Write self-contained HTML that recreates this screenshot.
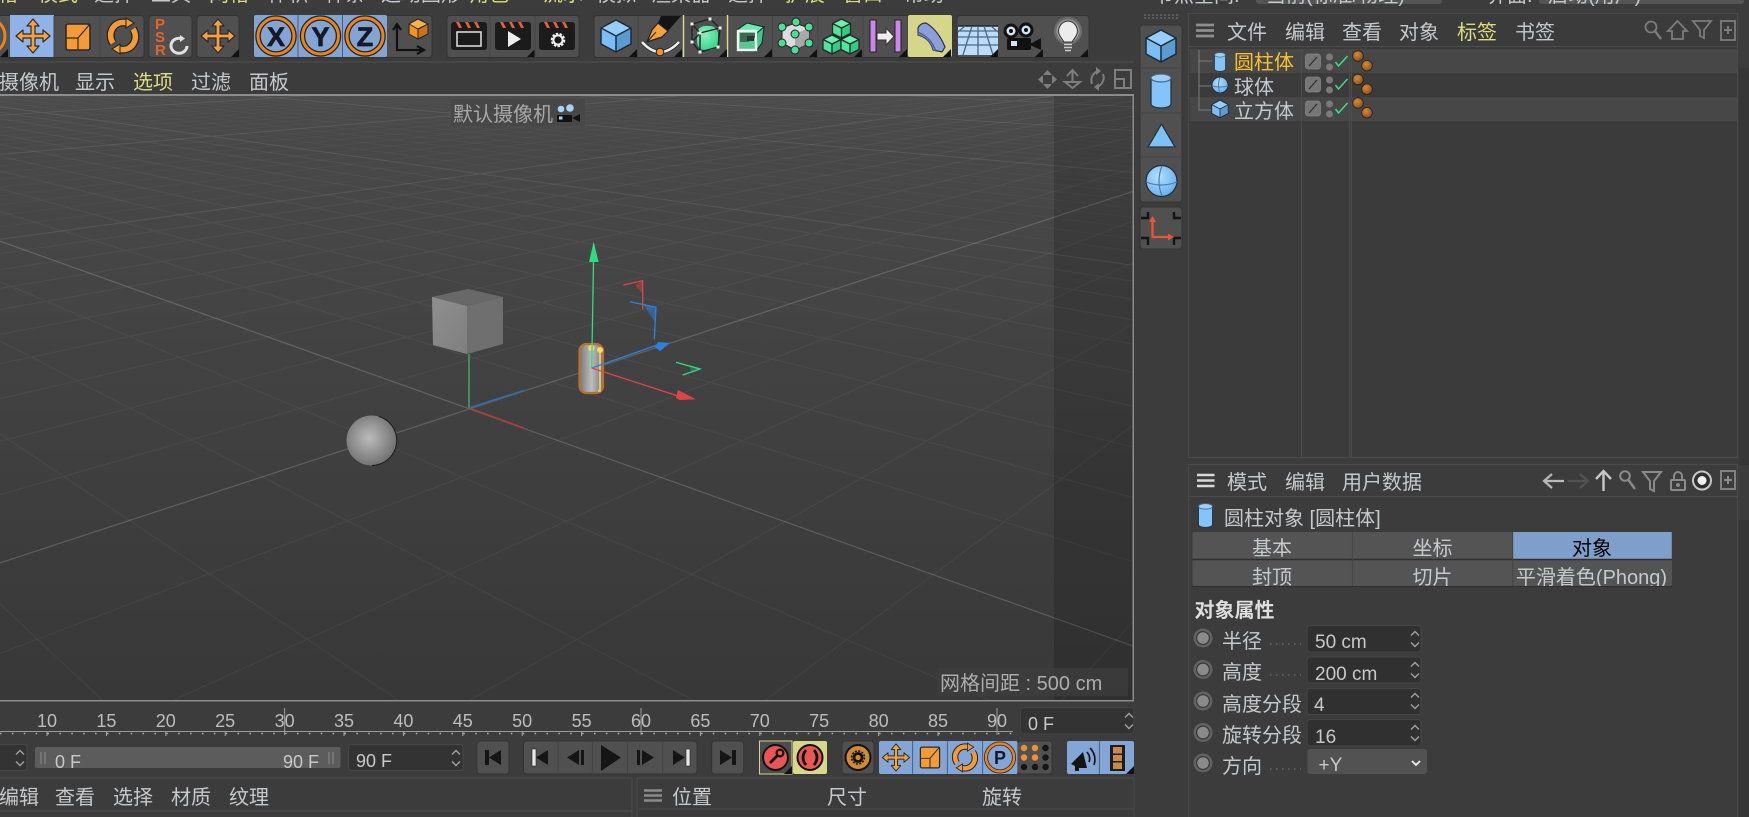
<!DOCTYPE html>
<html lang="zh"><head><meta charset="utf-8"><title>Cinema 4D</title>
<style>
html,body{margin:0;padding:0;background:#3c3c3c;overflow:hidden;width:1749px;height:817px}
body{position:relative}
svg{display:block}
text{font-family:"Liberation Sans","Noto Sans CJK SC",sans-serif;font-size:20px;fill:#c6c9cc}
.y{fill:#dcdc84}.l{font-size:18px;fill:#bdbdbd}.v{font-size:19px;fill:#c8c8c8}
.vt{position:absolute;left:1746px;writing-mode:vertical-rl;font:20px/20px "Liberation Sans","Noto Sans CJK SC",sans-serif;color:#b8b8b8;white-space:nowrap}
</style></head><body>
<svg xmlns="http://www.w3.org/2000/svg" width="1749" height="817" viewBox="0 0 1749 817">
<defs>
<linearGradient id="vp" x1="0" y1="0" x2="0" y2="1"><stop offset="0" stop-color="#4a4a4a"/><stop offset=".5" stop-color="#414141"/><stop offset="1" stop-color="#383838"/></linearGradient>
<linearGradient id="cg" x1="0" y1="0" x2="1" y2="0"><stop offset="0" stop-color="#777"/><stop offset=".5" stop-color="#bdbdbd"/><stop offset="1" stop-color="#777"/></linearGradient>
<linearGradient id="lf" x1="0" y1="0" x2="1" y2="1"><stop offset="0" stop-color="#8f8f8f"/><stop offset="1" stop-color="#7f7f7f"/></linearGradient>
<radialGradient id="sg" cx=".45" cy=".45" r=".6"><stop offset="0" stop-color="#bcbcbc"/><stop offset="1" stop-color="#6c6c6c"/></radialGradient>
<radialGradient id="bs" cx=".4" cy=".35" r=".7"><stop offset="0" stop-color="#b6dffd"/><stop offset="1" stop-color="#62aeee"/></radialGradient>
<radialGradient id="gs" cx=".4" cy=".35" r=".7"><stop offset="0" stop-color="#8df0be"/><stop offset="1" stop-color="#36d68a"/></radialGradient>
<radialGradient id="ob" cx=".4" cy=".35" r=".7"><stop offset="0" stop-color="#d98a3a"/><stop offset="1" stop-color="#8a4c12"/></radialGradient>
<clipPath id="vc"><rect x="0" y="96" width="1133" height="604"/></clipPath>
<clipPath id="tc"><rect x="1192" y="532" width="480" height="54"/></clipPath>
<path id="tri" d="M-8 0L0-8V0Z" fill="#111"/>
<g id="mv"><path d="M0-17L6-10H2V-2H10V-6L17 0L10 6V2H2V10H6L0 17L-6 10H-2V2H-10V6L-17 0L-10-6V-2H-2V-10H-6Z" fill="#f6a03e" stroke="#2a2a2a" stroke-width="1.2" stroke-linejoin="round"/></g>
<g id="sc"><rect x="-12" y="-13" width="24" height="26" rx="2" fill="#f49b38" stroke="#2a2a2a" stroke-width="1.6"/><path d="M-12 1H0V13M0 1L12-13" fill="none" stroke="#2a2a2a" stroke-width="1.2"/></g>
<g id="rt"><path d="M-10 7A12.500 13 0 0 1 4-13M10-7A12.500 13 0 0 1-4 13" fill="none" stroke="#222" stroke-width="8"/><path d="M-10 7A12.500 13 0 0 1 4-13M10-7A12.500 13 0 0 1-4 13" fill="none" stroke="#f49b38" stroke-width="5.500"/><path d="M3-18L11-13L3-8ZM-3 18L-11 13L-3 8Z" fill="#f49b38" stroke="#222" stroke-width="1"/></g>
<g id="cube"><path d="M0-16L15-8L0 0L-15-8Z" fill="#95cdfb"/><path d="M-15-8L0 0V16L-15 8Z" fill="#7cbdf6"/><path d="M15-8L0 0V16L15 8Z" fill="#5b9bd2"/><path d="M0-16L15-8V8L0 16L-15 8V-8ZM-15-8L0 0L15-8M0 0V16" fill="none" stroke="#1c2a36" stroke-width="1.5" stroke-linejoin="round"/></g>
<g id="gc"><path d="M0-9L9-4.500L0 0L-9-4.500Z" fill="#6ef0ae"/><path d="M-9-4.500L0 0V10L-9 5.500Z" fill="#4ee59a"/><path d="M9-4.500L0 0V10L9 5.500Z" fill="#38c884"/><path d="M0-9L9-4.500V5.500L0 10L-9 5.500V-4.500ZM-9-4.500L0 0L9-4.500M0 0V10" fill="none" stroke="#1f2a26" stroke-width="1.300" stroke-linejoin="round"/></g>
<g id="cy"><path d="M-10-13V13A10 4 0 0 0 10 13V-13Z" fill="#83c4fb" stroke="#26323c" stroke-width="1.3"/><ellipse cx="0" cy="-13" rx="10" ry="4" fill="#9ccffa" stroke="#4a6880" stroke-width="1.3"/></g>
<g id="rad"><circle r="9.500" fill="#626262"/><circle r="7" fill="#383838"/><circle r="5.800" fill="#8a8a8a"/></g>
<g id="ch"><path d="M-4-3.5L0-7.5L4-3.5M-4 3.5L0 7.5L4 3.5" fill="none" stroke="#a0a0a0" stroke-width="1.4"/></g>
<g id="lb"><rect x="0" y="0" width="15" height="15" rx="3" fill="#767676" stroke="#858585" stroke-width=".8"/><path d="M3.500 12L11.500 3" stroke="#2e2e2e" stroke-width="1.200"/></g>
<g id="chk"><circle cx="0" cy="0" r="3.500" fill="#7a7a7a"/><circle cx="0" cy="10" r="3.500" fill="#7a7a7a"/><path d="M6 5L9 9L18-1" fill="none" stroke="#3fdc88" stroke-width="1.500"/></g>
<g id="ob2"><circle cx="0" cy="0" r="5.300" fill="url(#ob)" stroke="#222" stroke-width=".8"/><circle cx="9" cy="9.700" r="5.300" fill="url(#ob)" stroke="#222" stroke-width=".8"/></g>
<g id="clap"><rect x="-18" y="-14" width="36" height="28" rx="3" fill="#1b1b1b"/><path d="M-13-14L-10-8H-7L-10-14ZM-4-14L-1-8H2L-1-14ZM5-14L8-8H11L8-14Z" fill="#e0643a"/></g>
</defs>

<rect width="1749" height="817" fill="#3c3c3c"/>

<!-- top menu remnants -->
<g>
<text x="-22" y="1" class="y">网格</text><text x="38" y="1" class="y">模式</text><text x="94" y="1">选择</text><text x="151" y="1">工具</text><text x="209" y="1" class="y">网格</text><text x="268" y="1">体积</text><text x="325" y="1">样条</text><text x="381" y="1">运动图形</text><text x="469" y="1" class="y">角色</text><text x="543" y="1" class="y">流水</text>
<text x="596" y="1">模拟</text><text x="651" y="1">渲染器</text><text x="728" y="1">选择</text><text x="785" y="1" class="y">扩展</text><text x="843" y="1" class="y">窗口</text><text x="904" y="1">帮助</text>
<text x="1154" y="2">节点空间:</text><rect x="1256" y="-10" width="186" height="14" rx="3" fill="#555"/><text x="1266" y="2">当前(标准/物理)</text>
<text x="1487" y="2">界面:</text><rect x="1539" y="-10" width="205" height="14" rx="3" fill="#555"/><text x="1548" y="2">启动(用户)</text>
</g>

<!-- main toolbar -->
<g fill="#505050" stroke="#333">
<rect x="-10" y="15.5" width="154" height="42" rx="3"/>
<rect x="149" y="15.5" width="43" height="42" rx="3"/>
<rect x="197" y="15.5" width="42" height="42" rx="3"/>
<rect x="254" y="15.5" width="178" height="42" rx="3"/>
<rect x="447" y="15.5" width="132" height="42" rx="3"/>
<rect x="594" y="15.5" width="358" height="42" rx="3"/>
<rect x="957" y="15.5" width="132" height="42" rx="3"/>
</g>
<circle cx="-13" cy="36" r="18" fill="none" stroke="#e8841e" stroke-width="3"/><use href="#tri" x="8" y="57"/>
<rect x="10" y="15" width="44" height="42" fill="#8fb3e6"/><use href="#mv" x="33" y="36"/>
<use href="#sc" x="78" y="37"/><path d="M54 16V57M100 16V57" stroke="#444"/>
<use href="#rt" x="123" y="36"/>
<text x="155" y="29" style="font-size:15px;font-weight:bold;fill:#e8622e">P</text><text x="155" y="42" style="font-size:15px;font-weight:bold;fill:#e8622e">S</text><text x="155" y="55" style="font-size:15px;font-weight:bold;fill:#e8622e">R</text>
<path d="M187 46A8 7.500 0 1 1 181 38.500" fill="none" stroke="#e0e0e0" stroke-width="3"/><path d="M180 35L185 38.500L180 42Z" fill="#e0e0e0"/>
<use href="#mv" x="218" y="36"/><use href="#tri" x="239" y="57"/>

<rect x="254" y="15" width="133" height="42" rx="2" fill="#84a4d4"/><path d="M298 15V57M342.5 15V57" stroke="#4a5f80"/>
<g fill="none"><circle cx="276" cy="36" r="18" stroke="#222" stroke-width="5.500"/><circle cx="276" cy="36" r="18" stroke="#e8841e" stroke-width="3"/>
<circle cx="320.5" cy="36" r="18" stroke="#222" stroke-width="5.500"/><circle cx="320.5" cy="36" r="18" stroke="#e8841e" stroke-width="3"/>
<circle cx="365" cy="36" r="18" stroke="#222" stroke-width="5.500"/><circle cx="365" cy="36" r="18" stroke="#e8841e" stroke-width="3"/></g>
<text x="276" y="46" text-anchor="middle" style="font-size:27px;font-weight:bold;fill:#15192a;stroke:#15192a;stroke-width:.7">X</text><text x="320.5" y="46" text-anchor="middle" style="font-size:27px;font-weight:bold;fill:#15192a;stroke:#15192a;stroke-width:.7">Y</text><text x="365" y="46" text-anchor="middle" style="font-size:27px;font-weight:bold;fill:#15192a;stroke:#15192a;stroke-width:.7">Z</text>
<path d="M397 25V50H422M393 30L397 24L401 30M417 46L424 50L417 54" fill="none" stroke="#111" stroke-width="2.2"/>
<path d="M409 24L418 19L428 24L418 29Z" fill="#ffb04c"/><path d="M409 24L418 29V39L409 34Z" fill="#f4921f"/><path d="M428 24L418 29V39L428 34Z" fill="#c8741a"/><path d="M418 19L428 24V34L418 39L409 34V24ZM409 24L418 29L428 24M418 29V39" fill="none" stroke="#222"/>

<use href="#clap" x="469" y="36"/><rect x="457" y="32" width="24" height="14" fill="none" stroke="#d8d8d8" stroke-width="1.6"/>
<use href="#clap" x="513" y="36"/><path d="M508 31L521 39L508 47Z" fill="#eee"/><use href="#tri" x="535" y="57"/>
<use href="#clap" x="557" y="36"/><circle cx="558" cy="40" r="5.5" fill="none" stroke="#eee" stroke-width="3.5" stroke-dasharray="2.2 1.2"/><circle cx="558" cy="40" r="4.6" fill="none" stroke="#eee" stroke-width="2"/>
<path d="M490 16V57M535 16V57" stroke="#444"/>

<use href="#cube" x="616" y="36"/><use href="#tri" x="637" y="57"/>
<path d="M638 16V57M683 16V57M728 16V57M772.5 16V57M818 16V57M863 16V57M908 16V57" stroke="#444"/>
<!-- pen -->
<path d="M661 16H681L668 31L658 23Z" fill="#141414"/><path d="M658 23L668 31L662 37L647 42L652 30Z" fill="#f5a041" stroke="#222" stroke-width="1.200" stroke-linejoin="round"/><path d="M648 41L656 32" stroke="#222"/>
<path d="M642 42Q660 62 679 42" fill="none" stroke="#222" stroke-width="4"/><path d="M642 42Q660 62 679 42" fill="none" stroke="#eee" stroke-width="2.600"/><circle cx="660" cy="52" r="3.800" fill="#f09030" stroke="#222"/><use href="#tri" x="682" y="57"/>
<path d="M683.5 15V57M727.5 15V57" stroke="#d8d88a" stroke-width="1.5"/>
<!-- subdivision -->
<rect x="697" y="26" width="21" height="24" rx="8" fill="url(#gs)"/><path d="M692 24L710 19L720 28L718 47L700 52L692 42ZM692 24L700 33L720 28M700 33V52M700 33L692 42" fill="none" stroke="#222" stroke-width="1.400"/>
<g fill="#eee"><rect x="690.500" y="22.500" width="3" height="3"/><rect x="708.500" y="17.500" width="3" height="3"/><rect x="718.500" y="26.500" width="3" height="3"/><rect x="716.500" y="45.500" width="3" height="3"/><rect x="698.500" y="50.500" width="3" height="3"/><rect x="690.500" y="40.500" width="3" height="3"/><rect x="698.500" y="31.500" width="3" height="3"/></g>
<use href="#tri" x="727" y="57"/>
<!-- box -->
<path d="M737 30L747 23L764 27L757 33Z" fill="#66eeac" stroke="#222"/><path d="M764 27L762 43L756 51L757 33Z" fill="#3bc985" stroke="#222"/><rect x="738" y="31" width="18" height="19" fill="#55c98f" stroke="#f5f5f5" stroke-width="2.400"/><path d="M740 33H755V38L748 42H740Z" fill="#3d6a54"/><rect x="747" y="36" width="7" height="5" fill="#333"/><use href="#tri" x="772" y="57"/>
<!-- array -->
<path d="M795 23L809 28V43L795 50L782 43V28Z" fill="#dcdcdc" stroke="#222"/><path d="M795 34L809 28V43L795 50Z" fill="#a9a9a9"/>
<g fill="#48e095" stroke="#222"><circle cx="796" cy="22" r="4"/><circle cx="809" cy="27" r="4"/><circle cx="809" cy="43" r="4"/><circle cx="795" cy="50" r="4"/><circle cx="782" cy="43" r="4"/><circle cx="782" cy="27" r="4"/><circle cx="795" cy="34" r="4"/></g><use href="#tri" x="817" y="57"/>
<!-- cloner cubes -->
<use href="#gc" x="841.500" y="28"/><use href="#gc" x="832" y="44"/><use href="#gc" x="850" y="44"/><use href="#tri" x="862" y="57"/>
<!-- effector -->
<rect x="870" y="20" width="6" height="32" fill="#cf86ec" stroke="#222"/><rect x="895" y="20" width="6" height="32" fill="#cf86ec" stroke="#222"/><path d="M877 33H886V28L894 36.500L886 45V40H877Z" fill="#eee" stroke="#333"/><use href="#tri" x="907" y="57"/>
<!-- bend -->
<rect x="908" y="15" width="44" height="42" rx="2" fill="#d6d68a"/><path d="M918 28Q920 23 926 23Q938 30 945 47L942 52L933 50Q930 38 918 35Z" fill="#8b9fdc" stroke="#2c2c40" stroke-width="1.200"/><path d="M918 32Q931 37 936 51L933 50Q930 38 918 35Z" fill="#6d80c0" stroke="#44506f" stroke-width=".8"/><use href="#tri" x="951" y="57"/>
<!-- floor -->
<path d="M958 26H998V55H958Z" fill="#bcdcf9"/><path d="M958 26H998" stroke="#222" stroke-width="1.500"/><path d="M958 31H998M958 37H998M958 45H998M972 26L963 55M984 26L993 55M978 26V55M965 26L958 32M991 26L998 32" stroke="#4a6a86" stroke-width="1.300" fill="none"/><use href="#tri" x="998" y="57"/>
<!-- camera -->
<circle cx="1011" cy="31" r="6" fill="#cfe6fa" stroke="#111" stroke-width="3"/><circle cx="1026" cy="30" r="6" fill="#cfe6fa" stroke="#111" stroke-width="3"/><circle cx="1011" cy="31" r="2" fill="#111"/><circle cx="1026" cy="30" r="2" fill="#111"/><rect x="1007" y="38" width="24" height="12" rx="2" fill="#111"/><path d="M1030 44L1041 38V50L1030 45Z" fill="#111"/><rect x="1011" y="41" width="6" height="5" fill="#cfe6fa"/><use href="#tri" x="1043" y="57"/>
<!-- bulb -->
<circle cx="1068" cy="31" r="14" fill="#fff" opacity=".18"/><circle cx="1068" cy="31" r="11.500" fill="#fff" opacity=".3"/><path d="M1068 21A10 10 0 0 1 1076 36L1072 42H1064L1060 36A10 10 0 0 1 1068 21Z" fill="#ececec" stroke="#333"/><path d="M1064 44.500H1072M1064 47.500H1072M1065 50.500H1071" stroke="#ccc" stroke-width="1.600"/><use href="#tri" x="1088" y="57"/>

<path d="M0 62H1134" stroke="#4a4a4a" stroke-width="1.5"/>

<!-- viewport menu -->
<text x="-1" y="89">摄像机</text><text x="75" y="89">显示</text><text x="133" y="89" class="y">选项</text><text x="191" y="89">过滤</text><text x="249" y="89">面板</text>
<g fill="none" stroke="#7e7e7e" stroke-width="2">
<path d="M1047.500 70L1043 75H1052ZM1047.500 89L1043 84H1052ZM1038 79.500L1043 75V84ZM1057 79.500L1052 75V84Z" fill="#7e7e7e" stroke="none"/><path d="M1043 75L1047.500 79.500L1052 75M1043 84L1047.500 79.500L1052 84" stroke="#3c3c3c" stroke-width="1.500"/>
<path d="M1072.500 71V83M1067 76L1072.500 70L1078 76M1065 82H1080L1072.500 88Z"/>
<path d="M1092 84A10 10 0 0 1 1098 71M1103 74A10 10 0 0 1 1097 87"/><path d="M1096 67L1101 71L1096 75ZM1099 91L1094 87L1099 83Z" fill="#7e7e7e" stroke="none"/>
<rect x="1115" y="70" width="16" height="18"/><path d="M1115 79H1124V88"/>
</g>

<!-- viewport -->
<rect x="0" y="95" width="1133" height="605" fill="url(#vp)"/>
<g clip-path="url(#vc)" fill="none">
<path stroke="#fff" stroke-opacity=".028" d="M-619 20L4535 700M-619 20L4830 700M-619 20L5126 700M-619 20L5421 700M-619 20L5717 700M-619 20L6012 700M-619 20L6308 700M-619 20L6603 700M-619 20L6899 700M-619 20L7490 700M-619 20L7785 700M-619 20L8081 700M-619 20L8376 700M-619 20L8672 700M-619 20L8967 700M-619 20L9263 700M-619 20L9558 700M-619 20L9854 700M-619 20L10445 700M-619 20L10740 700M-619 20L11036 700M-619 20L11331 700M-619 20L11627 700M-619 20L11922 700M-619 20L12218 700M-619 20L12513 700M-619 20L12809 700M-619 20L13400 700M-619 20L13695 700M-619 20L13991 700M-619 20L14286 700M-619 20L14582 700"/>
<path stroke="#fff" stroke-opacity=".028" d="M1689 9L-3674 700M1689 9L-3970 700M1689 9L-4266 700M1689 9L-4562 700M1689 9L-4858 700M1689 9L-5154 700M1689 9L-5450 700M1689 9L-5746 700M1689 9L-6042 700M1689 9L-6634 700M1689 9L-6930 700M1689 9L-7226 700M1689 9L-7522 700M1689 9L-7818 700M1689 9L-8114 700M1689 9L-8410 700M1689 9L-8706 700M1689 9L-9002 700M1689 9L-9594 700M1689 9L-9890 700M1689 9L-10186 700M1689 9L-10482 700M1689 9L-10778 700M1689 9L-11074 700M1689 9L-11370 700M1689 9L-11666 700M1689 9L-11962 700"/>
<path stroke="#fff" stroke-opacity=".05" d="M-619 20L102 700M-619 20L398 700M-619 20L693 700M-619 20L989 700M-619 20L1580 700M-619 20L1875 700M-619 20L2171 700M-619 20L2466 700M-619 20L2762 700M-619 20L3057 700M-619 20L3353 700M-619 20L3648 700M-619 20L3944 700M1689 9L1062 700M1689 9L766 700M1689 9L470 700M1689 9L174 700M1689 9L-122 700M1689 9L-714 700M1689 9L-1010 700M1689 9L-1306 700M1689 9L-1602 700M1689 9L-1898 700M1689 9L-2194 700M1689 9L-2490 700M1689 9L-2786 700M1689 9L-3082 700"/>
<path stroke="#fff" stroke-opacity=".09" d="M-619 20L4239 700M-619 20L7194 700M-619 20L10149 700M-619 20L13104 700M1689 9L-3378 700M1689 9L-6338 700M1689 9L-9298 700M1689 9L-12258 700"/>
<path stroke="#fff" stroke-opacity=".17" stroke-width="1.200" d="M-619 20L1284 700M1689 9L-418 700"/>
</g>
<rect x="1054" y="96" width="79" height="604" fill="#000" opacity=".15"/>
<rect x="0" y="94" width="1134" height="2" fill="#8c8c8c"/><rect x="0" y="700" width="1134" height="1.5" fill="#8c8c8c"/><rect x="1132.500" y="94" width="1.500" height="607" fill="#8c8c8c"/>

<!-- 3D objects -->
<path d="M469 354L469 408" stroke="#3aa866" stroke-width="1.5"/>
<path d="M432 297L468 289L503 297L467 306Z" fill="#686868"/><path d="M432 297L467 306V354L433 345Z" fill="url(#lf)"/><path d="M503 297V344L467 354V306Z" fill="#6f6f6f"/>
<path d="M469 408L523.500 390.500" stroke="#2c6fb8" stroke-width="1.5"/><path d="M469 408L524 428" stroke="#b73a3a" stroke-width="1.5"/>
<circle cx="371.500" cy="440.500" r="25" fill="url(#sg)"/><path d="M379 416.500A25 25 0 0 1 380 464A25 25 0 0 1 372 465.500" fill="none" stroke="#1c1c1c" stroke-width="1"/>
<rect x="579.500" y="344" width="23.500" height="49" rx="7" fill="url(#cg)" stroke="#b87030" stroke-width="2.200"/>
<path d="M598 391H600V351" fill="none" stroke="#f2d968" stroke-width="1.5"/>
<circle cx="591.500" cy="348" r="3" fill="#f2d968"/><circle cx="600" cy="350" r="3" fill="#f2d968"/>
<path d="M591.700 368L593.500 262" stroke="#2fdc80" stroke-width="1.300"/><path d="M593.700 241.500L589 262H598.500Z" fill="#2fdc80"/>
<path d="M591.700 368L660 344" stroke="#2b82e0" stroke-width="1.300"/><path d="M670 343L658 342L655 347L660 351Z" fill="#2b82e0"/>
<path d="M591.700 368L678 396" stroke="#e24444" stroke-width="1.300"/><path d="M695.700 399.300L678 390L676 398L680 400Z" fill="#e24444"/>
<path d="M623.300 285L642.700 280.700V309.300" fill="none" stroke="#e24444" stroke-width="1.300"/><path d="M635 285L642.700 281V294Z" fill="#e24444" opacity=".45"/>
<path d="M630 301.700L656 307.300L654.300 339.300" fill="none" stroke="#2b82e0" stroke-width="1.300"/><path d="M643.300 305L656 307.300L655 321.700Z" fill="#2b82e0" opacity=".5"/>
<path d="M676 362.300L700 369L682.700 375" fill="none" stroke="#2fdc80" stroke-width="1.300"/><path d="M690 365.700L700 369L692 372.500Z" fill="#2fdc80" opacity=".3" stroke="#2fdc80"/>

<!-- viewport labels -->
<rect x="451" y="99" width="134" height="27" rx="2" fill="#474747"/><text x="453" y="121" style="fill:#a8a8a8">默认摄像机</text>
<circle cx="561" cy="109" r="3.300" fill="#a9d3f5"/><circle cx="570" cy="108" r="3.800" fill="#a9d3f5"/><rect x="557" y="115" width="15" height="7" fill="#111"/><rect x="559" y="116.500" width="3.500" height="3" fill="#a9d3f5"/><path d="M572 118L580 114V122Z" fill="#111"/>
<rect x="937" y="668" width="191" height="28" fill="#3d3d3d" opacity=".75"/><text x="940" y="690" style="fill:#adadad">网格间距 : 500 cm</text>

<!-- timeline ruler -->
<path d="M0 731.500H1013" stroke="#9a9a9a" stroke-width="1"/>
<path d="M0 733.500H1013" stroke="#b5b5b5" stroke-width="1.500" stroke-dasharray="1.500 10.380"/>
<path d="M47 732V736M106.400 732V736M165.800 732V736M225.200 732V736M344 732V736M403.400 732V736M462.800 732V736M522.200 732V736M581.600 732V736M700.400 732V736M759.800 732V736M819.200 732V736M878.600 732V736M938 732V736" stroke="#aaa"/>
<path d="M284.600 708V735M641 708V735M997 708V735" stroke="#9c9c9c"/>
<g text-anchor="middle">
<text class="l" x="47" y="727">10</text><text class="l" x="106.400" y="727">15</text><text class="l" x="165.800" y="727">20</text><text class="l" x="225.200" y="727">25</text><text class="l" x="284.600" y="727">30</text><text class="l" x="344" y="727">35</text><text class="l" x="403.400" y="727">40</text><text class="l" x="462.800" y="727">45</text><text class="l" x="522.200" y="727">50</text><text class="l" x="581.600" y="727">55</text><text class="l" x="641" y="727">60</text><text class="l" x="700.400" y="727">65</text><text class="l" x="759.800" y="727">70</text><text class="l" x="819.200" y="727">75</text><text class="l" x="878.600" y="727">80</text><text class="l" x="938" y="727">85</text><text class="l" x="997" y="727">90</text>
</g>
<rect x="1020.500" y="707.500" width="113.500" height="26.500" rx="4" fill="#333" stroke="#444"/><text class="v" x="1028" y="730" style="font-size:18px">0 F</text><use href="#ch" x="1129" y="721"/>

<!-- range row -->
<rect x="-6" y="744.500" width="33" height="26" rx="3" fill="#333" stroke="#484848"/><use href="#ch" x="20" y="758"/>
<rect x="35" y="747" width="305.500" height="21" rx="2" fill="#5c5c5c"/><path d="M41 752V764M45 752V764M329 752V764M333 752V764" stroke="#868686" stroke-width="1.200"/>
<text class="v" x="55" y="768" style="font-size:18px">0 F</text><text class="v" x="283" y="768" style="font-size:18px">90 F</text>
<rect x="348.500" y="744.500" width="114.500" height="26" rx="3" fill="#333" stroke="#484848"/><text class="v" x="356" y="767" style="font-size:18px">90 F</text><use href="#ch" x="456" y="758"/>

<!-- transport -->
<g fill="#505050" stroke="#333"><rect x="477" y="741" width="32" height="33" rx="3"/><rect x="523.500" y="741" width="173.500" height="33" rx="3"/><rect x="711.700" y="741" width="32" height="33" rx="3"/><rect x="842" y="741" width="32" height="33" rx="3"/><rect x="1017.500" y="741" width="34.500" height="33" rx="3"/></g>
<path d="M558 742V773M592.400 742V773M627.500 742V773M662.700 742V773" stroke="#444"/>
<g fill="#151515"><path d="M485 750H489V765H485ZM489 757.500L501 750V765Z"/>
<path d="M536 750L548 757.500L536 765Z" transform="matrix(-1 0 0 1 1084 0)"/>
<path d="M567 757.500L579 750V765ZM581 750H584V765H581Z"/>
<path d="M601 745L621 757.500L601 771Z"/>
<path d="M637 750H640V765H637ZM642 750L654 757.500L642 765Z"/>
<path d="M673 750L685 757.500L673 765Z"/>
<path d="M720 750L732 757.500L720 765ZM732 750H736V765H732Z"/></g>
<rect x="532" y="749" width="4" height="17" fill="#e8e8e8" stroke="#222" stroke-width=".6"/><rect x="686" y="749" width="4" height="17" fill="#e8e8e8" stroke="#222" stroke-width=".6"/>

<rect x="759.500" y="741" width="32.500" height="33" fill="#4c4c4c" stroke="#d4d48a"/><rect x="793" y="741" width="34" height="33" rx="2" fill="#d8d88a"/>
<circle cx="775.500" cy="757.500" r="12.500" fill="#e85656" stroke="#111" stroke-width="2"/><path d="M770 763L778 755" stroke="#111" stroke-width="2.800"/><circle cx="780" cy="753" r="3.400" fill="none" stroke="#111" stroke-width="2.200"/><use href="#tri" x="792" y="774"/>
<circle cx="810" cy="757.500" r="12.500" fill="#e85656" stroke="#111" stroke-width="2"/><path d="M806 750Q800 757.500 806 765M814 750Q820 757.500 814 765" fill="none" stroke="#111" stroke-width="2.800"/>
<circle cx="858" cy="757.500" r="12.500" fill="#d08a34" stroke="#111" stroke-width="2"/><circle cx="858" cy="757.500" r="4" fill="none" stroke="#111" stroke-width="2.800"/><circle cx="858" cy="757.500" r="6.500" fill="none" stroke="#111" stroke-width="1.500" stroke-dasharray="2 1.400"/>

<rect x="879" y="741" width="138.500" height="33" rx="2" fill="#84a6d6"/><path d="M912.600 741V774M947.400 741V774M982.600 741V774" stroke="#4a5f80"/>
<g transform="translate(896 757.500) scale(.8)"><use href="#mv"/></g>
<g transform="translate(930 757.500) scale(.8)"><use href="#sc"/></g>
<g transform="translate(965 757.500) scale(.8)"><use href="#rt"/></g>
<circle cx="1000" cy="757.500" r="14" fill="none" stroke="#222" stroke-width="4"/><circle cx="1000" cy="757.500" r="14" fill="none" stroke="#e8841e" stroke-width="2.500"/><text x="1000" y="764" text-anchor="middle" style="font-size:18px;font-weight:bold;fill:#15192a">P</text>
<g fill="#f09030"><circle cx="1024" cy="748" r="3.200" fill="#e8912f"/><circle cx="1035" cy="748" r="3.200"/><circle cx="1024" cy="757.500" r="3.200"/><circle cx="1035" cy="757.500" r="3.200"/></g><g fill="#151515"><circle cx="1045.500" cy="748" r="3.200"/><circle cx="1045.500" cy="757.500" r="3.200"/><circle cx="1024" cy="767" r="3.200"/><circle cx="1035" cy="767" r="3.200"/><circle cx="1045.500" cy="767" r="3.200"/></g>

<rect x="1067" y="741" width="67" height="33" rx="2" fill="#84a6d6"/><path d="M1099.400 741V774" stroke="#4a5f80"/>
<path d="M1071 764L1083 752L1087 768L1079 768V771H1075V766Z" fill="#141414"/><path d="M1087 752Q1091 757 1089 762M1090 748Q1097 755 1094 765" fill="none" stroke="#141414" stroke-width="1.700"/>
<rect x="1110" y="745" width="15" height="26" fill="#1c1c1c"/><path d="M1113 747H1122V753.500H1113ZM1113 755H1122V761H1113ZM1113 762.500H1122V769H1113Z" fill="#c88a48"/><use href="#tri" x="1134" y="774"/>

<!-- bottom panels -->
<path d="M0 778H632M637 778H1134M632 778V817M637 778V817M0 811H632M639 809H1133M1134 778V817" stroke="#4d4d4d" fill="none"/>
<text x="-1" y="804">编辑</text><text x="55" y="804">查看</text><text x="113" y="804">选择</text><text x="171" y="804">材质</text><text x="229" y="804">纹理</text>
<path d="M644 790.500H662M644 795.500H662M644 800.500H662" stroke="#8a8a8a" stroke-width="2.600"/>
<text x="672" y="804">位置</text><text x="827" y="804">尺寸</text><text x="982" y="804">旋转</text>

<!-- right vertical toolbar -->
<path d="M1144 15H1180M1144 18H1180" stroke="#666" stroke-dasharray="2 2" stroke-width="1.500"/>
<rect x="1140" y="25" width="42" height="177" rx="3" fill="#505050" stroke="#333"/><path d="M1140 68H1182M1140 113H1182M1140 157H1182" stroke="#444"/>
<use href="#cube" x="1161" y="46"/><use href="#cy" x="1161" y="91"/>
<path d="M1161.500 124L1175 147H1148Z" fill="#7fc0f7" stroke="#26323c" stroke-width="1.300" stroke-linejoin="round"/>
<circle cx="1161.500" cy="181" r="15.500" fill="url(#bs)" stroke="#22303c" stroke-width="1.300"/><path d="M1146 182Q1161 188 1177 182M1162 166Q1156 181 1162 196" fill="none" stroke="#4a7da8" stroke-width="1.200"/>
<rect x="1140" y="207" width="42" height="42" rx="3" fill="#505050" stroke="#333"/>
<path d="M1141 218H1148V212M1181 218H1174V212M1141 238H1148V245M1181 238H1174V245" fill="none" stroke="#151515" stroke-width="2.500"/>
<path d="M1152.500 219V237H1171" fill="none" stroke="#e8582e" stroke-width="2.300"/><path d="M1149 222L1152.500 216L1156 222ZM1168 233.500L1174 237L1168 240.500Z" fill="#e8582e"/>

<!-- right tabs -->
<rect x="1739" y="68" width="10" height="397" fill="#363636"/><rect x="1739" y="520" width="10" height="297" fill="#363636"/>

<!-- object manager -->
<rect x="1188.500" y="13.500" width="549" height="444" fill="#3b3b3b" stroke="#4a4a4a"/>
<path d="M1196 25H1214M1196 30.500H1214M1196 36H1214" stroke="#8e8e8e" stroke-width="2.800"/>
<text x="1227" y="39">文件</text><text x="1285" y="39">编辑</text><text x="1342" y="39">查看</text><text x="1399" y="39">对象</text><text x="1457" y="39" class="y">标签</text><text x="1515" y="39">书签</text>
<g fill="none" stroke="#7c7c7c" stroke-width="1.800"><circle cx="1651" cy="27" r="5.500"/><path d="M1655 31L1661 39" stroke-width="2.500"/><path d="M1677.500 21L1668 31H1672V39H1683V31H1687Z"/><path d="M1693 21H1711L1704 30V38L1700 36V30Z"/><rect x="1721" y="21" width="14" height="19"/><path d="M1728 26V34M1724 30H1732" stroke-width="2"/></g>
<path d="M1189 46.500H1737" stroke="#4c4c4c"/>
<rect x="1190" y="49" width="547" height="24" fill="#474747"/><rect x="1190" y="97" width="547" height="24" fill="#474747"/>
<path d="M1301.500 49V457M1349.500 49V457M1351.500 49V457" stroke="#4d4d4d"/>
<path d="M1199 50V110H1211M1199 61H1212M1199 86H1211" fill="none" stroke="#7c7c7c"/>
<g transform="translate(1220 62) scale(.55)"><use href="#cy"/></g>
<circle cx="1220" cy="85" r="8" fill="url(#bs)" stroke="#22303c"/><path d="M1212 86Q1220 88 1228 86M1220 77Q1217 85 1220 93" fill="none" stroke="#4a7da8"/>
<g transform="translate(1220 109) scale(.55)"><use href="#cube"/></g>
<text x="1234" y="69" style="fill:#fcc22a">圆柱体</text><text x="1234" y="94">球体</text><text x="1234" y="118">立方体</text>
<use href="#lb" x="1305.500" y="54"/><use href="#lb" x="1305.500" y="77"/><use href="#lb" x="1305.500" y="101"/>
<use href="#chk" x="1329.500" y="57"/><use href="#chk" x="1329.500" y="80"/><use href="#chk" x="1329.500" y="104"/>
<use href="#ob2" x="1358" y="56"/><use href="#ob2" x="1358" y="79.500"/><use href="#ob2" x="1358" y="103"/>

<!-- attribute manager -->
<rect x="1188.500" y="464.500" width="549" height="360" fill="#3c3c3c" stroke="#4a4a4a"/>
<path d="M1197 475H1214.500M1197 480.500H1214.500M1197 486H1214.500" stroke="#d8d8d8" stroke-width="2.600"/>
<text x="1227" y="489">模式</text><text x="1285" y="489">编辑</text><text x="1342" y="489">用户数据</text>
<g fill="none" stroke="#8a8a8a" stroke-width="2"><path d="M1564 481H1545M1552 474L1544 481L1552 488" stroke="#b8b8b8" stroke-width="2.200"/><path d="M1568 481H1587M1580 474L1588 481L1580 488" stroke="#525252" stroke-width="2.200"/><path d="M1603.500 491V472M1596 479L1603.500 471L1611 479" stroke="#c8c8c8" stroke-width="2.400"/><circle cx="1625" cy="476" r="4.800"/><path d="M1628.500 480L1635 489" stroke-width="2.400"/><path d="M1643 472H1661L1654 481V491L1650 489V481Z"/><rect x="1671" y="480" width="14" height="10" rx="1"/><path d="M1674 480V476A4 4 0 0 1 1682 476V480"/><circle cx="1678" cy="485" r="1" fill="#8a8a8a"/><rect x="1721" y="471" width="14" height="18" stroke-width="1.800"/><path d="M1728 476V484M1724 480H1732"/></g>
<circle cx="1702" cy="480.500" r="9" fill="#303030" stroke="#c8c8c8" stroke-width="2"/><circle cx="1702" cy="480.500" r="4.500" fill="#f2f2f2"/>
<path d="M1189 496.500H1737" stroke="#4c4c4c"/>
<g transform="translate(1205.500 515.500) scale(.7)"><use href="#cy"/></g>
<text x="1224" y="525">圆柱对象 [圆柱体]</text>

<rect x="1192.500" y="532" width="479.500" height="54" rx="2" fill="#545454"/>
<rect x="1512.700" y="532" width="159" height="27.300" fill="#7f9fcb"/>
<path d="M1192.500 559.500H1672" stroke="#2f2f2f" stroke-width="1.500"/><path d="M1352.400 532V586M1512.700 532V586" stroke="#444"/><path d="M1192.500 586.500H1672" stroke="#2f2f2f"/>
<g clip-path="url(#tc)">
<text x="1272" y="555" text-anchor="middle">基本</text><text x="1432.500" y="555" text-anchor="middle">坐标</text><text x="1592" y="555" text-anchor="middle" style="fill:#000">对象</text>
<text x="1272" y="584" text-anchor="middle">封顶</text><text x="1432.500" y="584" text-anchor="middle">切片</text><text x="1591.500" y="584" text-anchor="middle">平滑着色(Phong)</text>
</g>
<text x="1194.500" y="617" style="font-weight:bold;fill:#dedede">对象属性</text>

<use href="#rad" x="1203" y="638"/><use href="#rad" x="1203" y="669.500"/><use href="#rad" x="1203" y="701"/><use href="#rad" x="1203" y="732.500"/><use href="#rad" x="1203" y="763"/>
<text x="1222" y="648">半径</text><text x="1222" y="679">高度</text><text x="1222" y="711">高度分段</text><text x="1222" y="742">旋转分段</text><text x="1222" y="773">方向</text>
<path d="M1270 644H1301M1270 675H1301M1270 769H1301" stroke="#7a7a7a" stroke-dasharray="1.500 4.500"/>
<g fill="#303030" stroke="#464646"><rect x="1307" y="625.500" width="114" height="26.500" rx="3"/><rect x="1307" y="657" width="114" height="26" rx="3"/><rect x="1307" y="688.500" width="114" height="26" rx="3"/><rect x="1307" y="719.500" width="114" height="26.500" rx="3"/></g>
<text class="v" x="1315" y="648">50 cm</text><text class="v" x="1315" y="680">200 cm</text><text class="v" x="1314" y="711">4</text><text class="v" x="1315" y="743">16</text>
<use href="#ch" x="1415" y="639"/><use href="#ch" x="1415" y="670"/><use href="#ch" x="1415" y="701"/><use href="#ch" x="1415" y="733"/>
<rect x="1307.500" y="749" width="119.500" height="25" rx="3" fill="#525252"/><text class="v" x="1318.500" y="771">+Y</text>
<path d="M1412 761L1416 765L1420 761" fill="none" stroke="#eee" stroke-width="1.800"/>
</svg>
<div class="vt" style="top:18px">对象</div>
<div class="vt" style="top:82px">场次 内容浏览器</div>
<div class="vt" style="top:470px">属性</div>
<div class="vt" style="top:530px">层 结构</div>
</body></html>
